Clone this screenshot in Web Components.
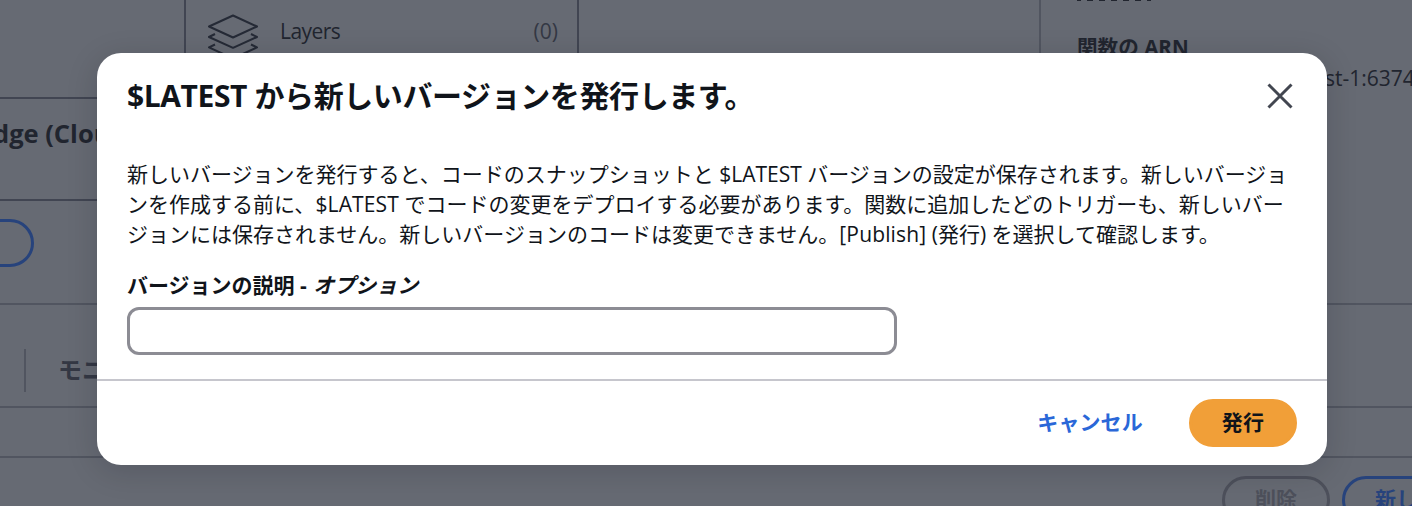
<!DOCTYPE html>
<html lang="ja">
<head>
<meta charset="utf-8">
<title>Lambda</title>
<style>
html,body{margin:0;height:100%;overflow:hidden}
body{font-family:"Open Sans","Noto Sans CJK JP",sans-serif;font-size:21px;line-height:30px;color:#21252f;background:#666a73}
</style>
</head>
<body>
<lambda-app></lambda-app>
<script>
const define=(name,html)=>{
  const t=document.createElement('template');t.innerHTML=html;
  customElements.define(name,class extends HTMLElement{
    constructor(){super();this.attachShadow({mode:'open'}).append(t.content.cloneNode(true));}
  });
};

define('layers-icon',`<style>:host{display:block;width:52px;height:52px}svg{display:block}</style>
<svg width="52" height="52" viewBox="0 0 52 52" fill="none" stroke="#252a36" stroke-width="2" stroke-linejoin="round">
<path d="M2 12.500 26 1.500l24 11L26 23.500z"/>
<path d="M8 20 2 23 26 33.800l24-10.800L44 20"/>
<path d="M8 30.500 2 33.400 26 44.500 50 33.400 44 30.500"/></svg>`);

define('close-icon',`<style>:host{display:block;width:26px;height:26px}svg{display:block}</style>
<svg width="26" height="26" viewBox="0 0 26 26" fill="none" stroke="#424650" stroke-width="3"><path d="M1.500 1.500 24.500 24.500M24.500 1.500 1.500 24.500"/></svg>`);

define('ui-button',`<style>
:host{display:flex;flex:none;box-sizing:border-box;height:48px;align-items:center;justify-content:center;border:3px solid transparent;border-radius:24px;padding:0 30px 2px;font-weight:700;letter-spacing:.1px;white-space:nowrap}
:host([kind=primary]){background:#f19f38;border-color:#f19f38;color:#10141a}
:host([kind=link]){color:#2a67d8}
:host([kind=outline]){border-color:#27437c;color:#27437c}
:host([kind=disabled]){border-color:#4d505b;color:#4d505b}
</style><slot></slot>`);

define('layers-node',`<style>
:host{display:flex;box-sizing:border-box;width:395px;height:78px;margin-left:184px;border:solid #414552;border-width:0 2px 2px;padding:14px 19px 0 21px}
.t{margin:2px 0 0 21px;flex:1;letter-spacing:-.55px}.n{margin-top:2px;color:#343844}
</style><layers-icon></layers-icon><span class="t"><slot></slot></span><span class="n"><slot name="count"></slot></span>`);

define('function-designer',`<style>
:host{display:flex;flex-direction:column;flex:1;min-width:0}
.top{height:97px}
.row{box-sizing:border-box;height:104px;border:solid #414552;border-width:2px 0;padding-top:19px;width:700px;white-space:nowrap;overflow:hidden;font-weight:700;font-size:25.500px}
.row span{display:block;margin-left:-7px}
.act{margin-top:18px;display:flex}
ui-button{width:134px;margin-left:-100px}
</style>
<div class="top"><layers-node>Layers<span slot="count">(0)</span></layers-node></div>
<div class="row"><span>dge (CloudFront)</span></div>
<div class="act"><ui-button kind="outline"></ui-button></div>`);

define('function-details',`<style>
:host{display:block;box-sizing:border-box;width:373px;border-left:2px solid #515560;padding-left:36px;white-space:nowrap;overflow:hidden}
.mark{display:flex;gap:6px;height:1px}
.mark i{width:6px;background:#21252f}
.mark i:first-child,.mark i:last-child{width:4px}
.k{font-weight:700;margin-top:31px;font-size:20.600px}
.v{margin-left:248px;margin-top:1px}
</style><div class="mark"><i></i><i></i><i></i><i></i><i></i><i></i><i></i></div>
<div class="k">関数の ARN</div><div class="v">st-1:63740</div>`);

define('tab-strip',`<style>
:host{display:flex;box-sizing:border-box;height:105px;border:solid #515560;border-width:2px 0;padding:44px 0 0 24px;font-size:24px;font-weight:700;color:#343844}
i{width:2px;height:43px;background:#515560}span{margin:6px 0 0 32px}
</style><i></i><span><slot></slot></span>`);

define('version-bar',`<style>
:host{display:block}.gap{height:48px;border-bottom:2px solid #515560}
.b{display:flex;gap:12px;margin:18px 0 0 1222px}
ui-button[kind=disabled]{width:108px}ui-button[kind=outline]{width:240px;justify-content:flex-start}
</style><div class="gap"></div><div class="b"><ui-button kind="disabled">削除</ui-button><ui-button kind="outline">新しい</ui-button></div>`);

define('text-field',`<style>
:host{display:block}
label{display:block;font-weight:700;font-size:21px;line-height:30px;white-space:pre}
em{font-style:italic;margin-left:1px}
input{display:block;box-sizing:border-box;width:770px;height:48px;margin:7px 0 0;border:3px solid #8c8c94;border-radius:12px;background:#fff;padding:0 15px;font:inherit;outline:0}
</style><label><slot></slot><em><slot name="hint"></slot></em></label><input type="text">`);

define('modal-dialog',`<style>
:host{display:flex;flex-direction:column;box-sizing:border-box;width:1230px;height:412px;background:#fff;border-radius:24px;color:#10141a;box-shadow:0 6px 30px 2px rgba(0,7,22,.14)}
header{display:flex;justify-content:space-between;padding:22px 34px 0 30px;height:84px;box-sizing:border-box}
h2{margin:0;font-size:30px;line-height:42px;letter-spacing:-.4px;font-weight:700;white-space:nowrap}
close-icon{margin-top:8px}
.body{flex:1;padding:22px 30px 0}
footer{display:flex;align-items:center;justify-content:flex-end;gap:13px;box-sizing:border-box;height:86px;border-top:2px solid #c6c6cd;padding:0 30px}
</style>
<header><h2><slot name="title"></slot></h2><close-icon></close-icon></header>
<div class="body"><slot></slot></div>
<footer><slot name="actions"></slot></footer>`);

define('lambda-app',`<style>
:host{display:block;position:relative;width:1412px;height:506px;overflow:hidden}
.upper{display:flex;height:303px}
modal-dialog{position:absolute;left:97px;top:53px}
p{margin:0 0 21px;white-space:nowrap;line-height:30px}
.h{letter-spacing:-.4px}.l{letter-spacing:.15px}
</style>
<div class="upper"><function-designer></function-designer><function-details></function-details></div>
<tab-strip>モニタリング</tab-strip>
<version-bar></version-bar>
<modal-dialog>
<span slot="title"><span class="h">$LATEST</span> から新しいバージョンを発行します。</span>
<p>新しいバージョンを発行すると、コードのスナップショットと $LATEST バージョンの設定が保存されます。新しいバージョ<br>ンを作成する前に、<span class="l">$LATEST</span> でコードの変更をデプロイする必要があります。関数に追加したどのトリガーも、新しいバー<br>ジョンには保存されません。新しいバージョンのコードは変更できません。<span class="l">[Publish]</span> (発行) を選択して確認します。</p>
<text-field>バージョンの説明 - <span slot="hint">オプション</span></text-field>
<ui-button slot="actions" kind="link">キャンセル</ui-button>
<ui-button slot="actions" kind="primary">発行</ui-button>
</modal-dialog>`);
</script>
</body>
</html>
